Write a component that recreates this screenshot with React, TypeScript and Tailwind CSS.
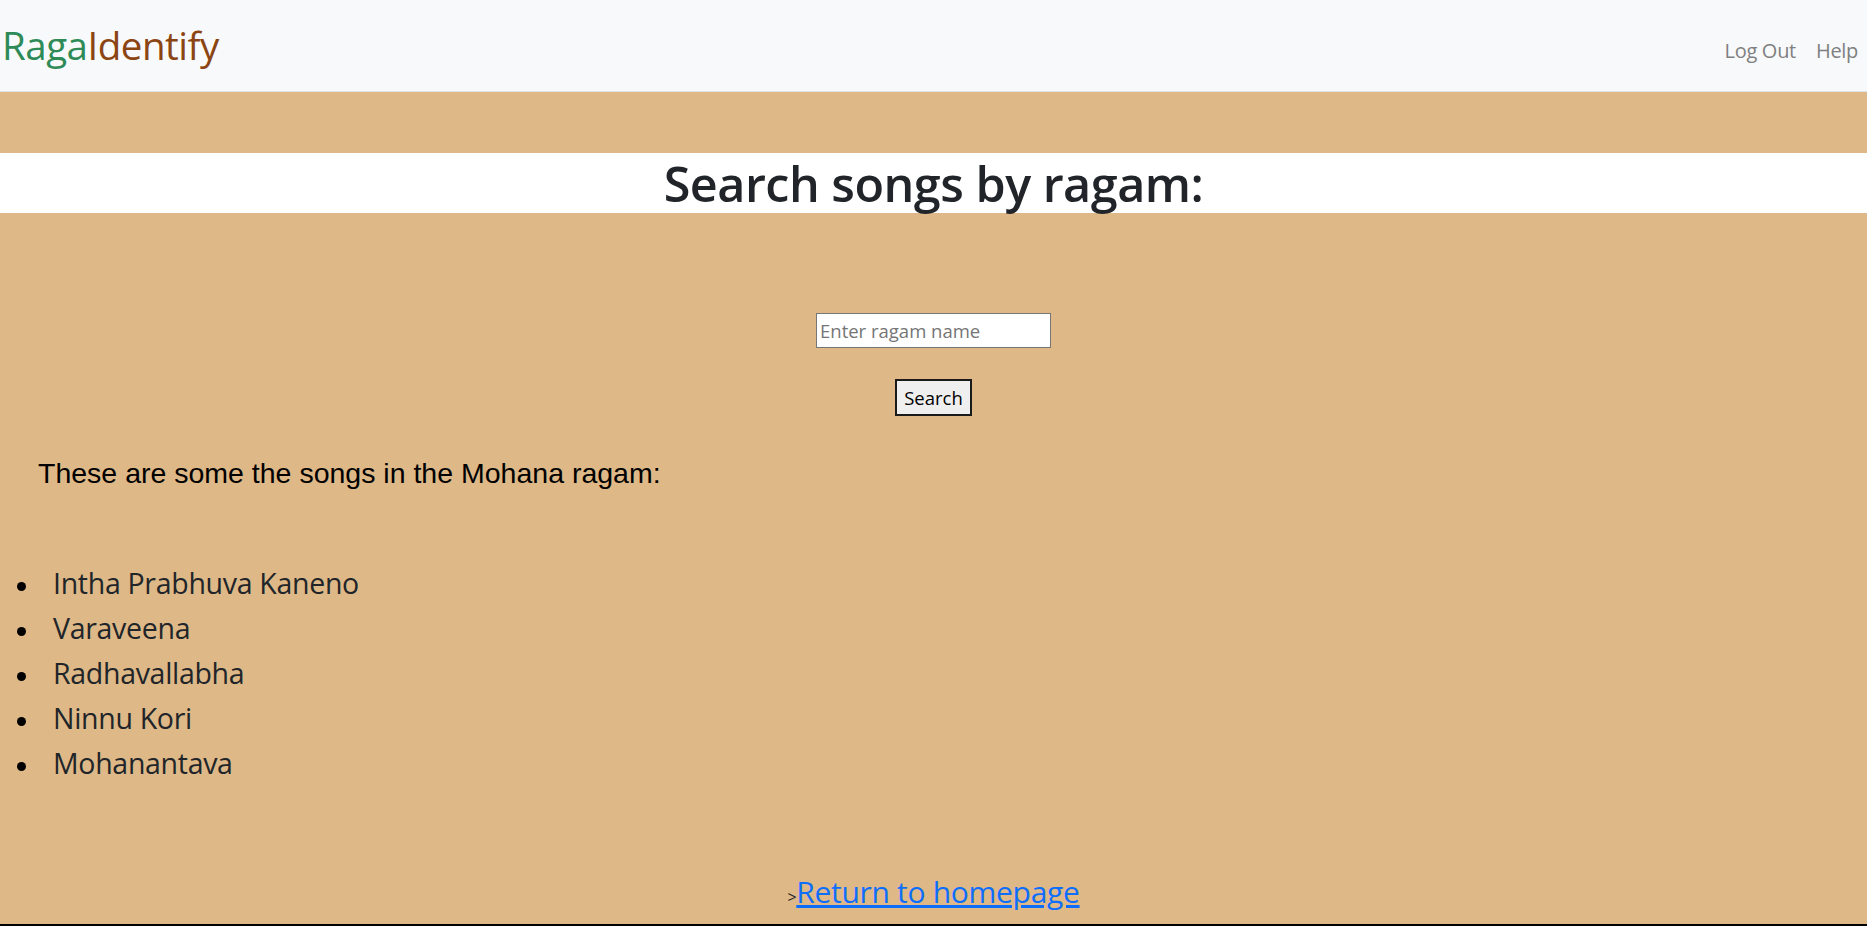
export default function App() {
  const songs = ["Intha Prabhuva Kaneno", "Varaveena", "Radhavallabha", "Ninnu Kori", "Mohanantava"];
  const seg = { fontFamily: '"Open Sans", "Noto Sans", sans-serif' };
  return (
    <div className="min-h-[926px] bg-[#deb887] flex flex-col" style={seg}>
      <nav className="h-[92px] bg-[#f8f9fa] border-b border-[#dee2e6] flex items-center justify-between pr-[9px]">
        <div className="text-[38.5px] leading-none tracking-[-0.5px] pl-[2px] mt-[0px]">
          <span className="text-[#2e8b57]">Raga</span>
          <span className="text-[#8b4513]">Identify</span>
        </div>
        <div className="flex items-center gap-[20px] text-[20px] text-[#7f8081] tracking-[-0.3px] mt-[10px]">
          <span>Log Out</span>
          <span>Help</span>
        </div>
      </nav>
      <h1 className="mt-[61px] h-[60px] bg-white text-center text-[48.5px] leading-[60px] font-semibold text-[#212529] tracking-[-0.5px]">
        Search songs by ragam:
      </h1>
      <div className="flex flex-col items-center mt-[100px]">
        <input
          placeholder="Enter ragam name"
          className="w-[235px] h-[35px] bg-white border border-[#767676] px-[3px] text-[18.5px] text-black placeholder:text-[#757575] outline-none"
        />
        <button className="mt-[31px] w-[77px] h-[37px] bg-[#efefef] border-2 border-[#1a1a1a] text-[18.5px] text-black">
          Search
        </button>
      </div>
      <p className="mt-[42px] ml-[38px] text-[28.5px] leading-[30px] text-black" style={{ fontFamily: '"Liberation Sans", Arial, sans-serif' }}>
        These are some the songs in the Mohana ragam:
      </p>
      <ul className="mt-[73px] text-[28.5px] leading-[45px] text-[#212529] tracking-[-0.3px]">
        {songs.map((s) => (
          <li key={s} className="flex items-center">
            <span className="w-[53px] flex items-center">
              <span className="ml-[17px] mt-[6px] w-[9px] h-[9px] rounded-full bg-black" />
            </span>
            <span>{s}</span>
          </li>
        ))}
      </ul>
      <div className="mt-[83px] text-center text-[30px] leading-[45px] tracking-[-0.3px]">
        <span className="text-[16px] text-[#212529]">&gt;</span>
        <a href="#" className="text-[#0d6efd] underline">Return to homepage</a>
      </div>
      <div className="flex-1" />
      <div className="h-[2px] bg-black" />
    </div>
  );
}
